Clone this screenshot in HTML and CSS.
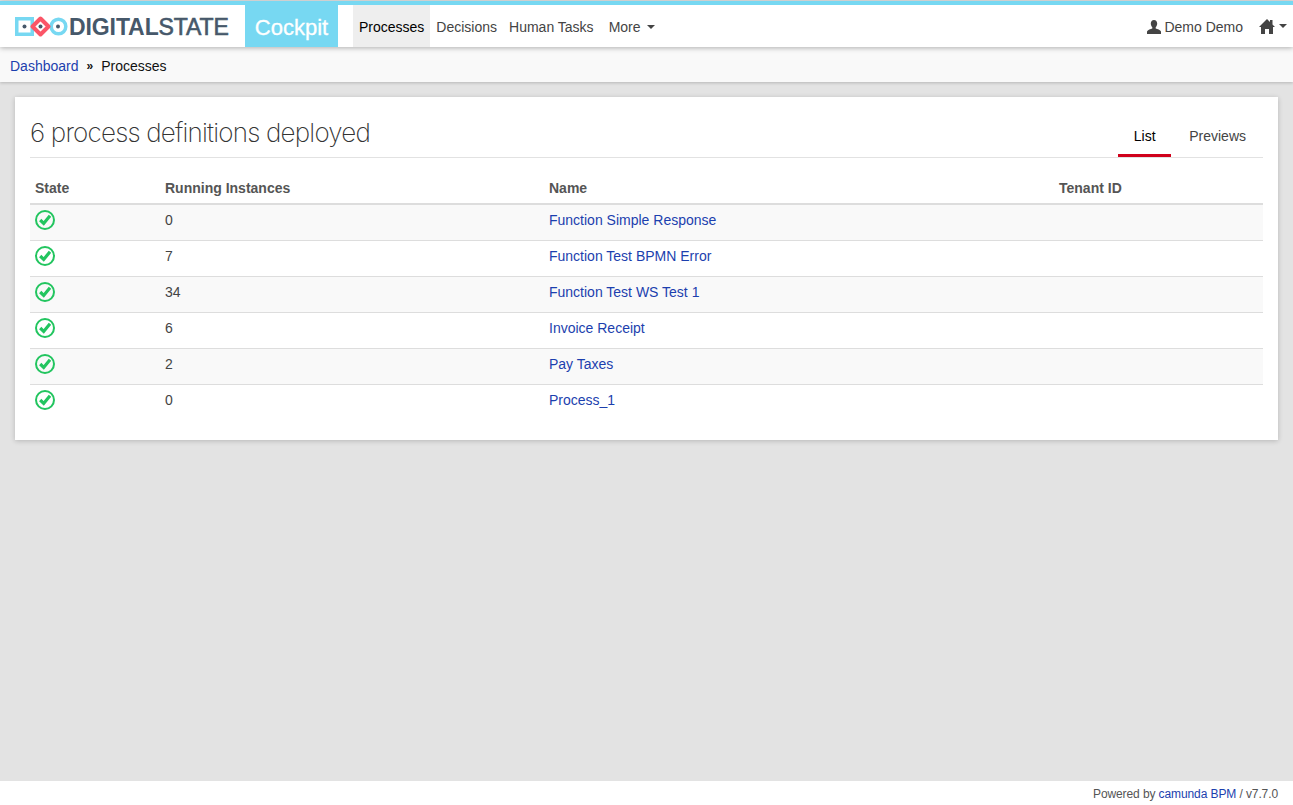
FILE: index.html
```html
<!DOCTYPE html>
<html lang="en">
<head>
    <meta charset="UTF-8">
    <title>Cockpit</title>
    <link rel="stylesheet" href="styles.css">
</head>
<body>
    <header class="navbar">
        <a class="logo" href="#">
            <svg class="logo-mark" width="54" height="22" viewBox="0 0 54 22">
                <rect x="1.750" y="2.750" width="15.500" height="15.500" fill="none" stroke="#77d8f2" stroke-width="3.500"/>
                <circle cx="9.500" cy="10.500" r="2" fill="#46586a"/>
                <circle cx="43.500" cy="10.500" r="7.300" fill="none" stroke="#77d8f2" stroke-width="3.500"/>
                <circle cx="43" cy="10.500" r="2" fill="#46586a"/>
                <polygon points="25.500,2.500 33.500,10.500 25.500,18.500 17.500,10.500" fill="#fff" stroke="#fb5567" stroke-width="4" stroke-linejoin="round"/>
                <circle cx="25.500" cy="10.500" r="2" fill="#46586a"/>
            </svg>
            <span class="logo-text">DIGITAL<span class="logo-thin">STATE</span></span>
        </a>
        <a class="brand" href="#">Cockpit</a>
        <nav class="nav-main">
            <a class="active" href="#">Processes</a>
            <a href="#">Decisions</a>
            <a href="#">Human Tasks</a>
            <a class="more" href="#">More <i class="caret"></i></a>
        </nav>
        <div class="nav-right">
            <a class="user" href="#">
                <svg width="14" height="14" viewBox="0 0 14 14"><path d="M7 0c2 0 3.200 1.500 3.200 3.600 0 1.500-.6 2.900-1.500 3.700v1.200c1.500.6 4.800 1.300 5.300 3V14H0v-2.500c.5-1.700 3.800-2.400 5.300-3V7.300C4.400 6.500 3.800 5.100 3.800 3.600 3.800 1.500 5 0 7 0z" fill="#444"/></svg>
                Demo Demo
            </a>
            <a class="home" href="#">
                <svg width="16" height="15" viewBox="0 0 16 15"><path d="M8 0l3 3V1h2.500v4.500L16 8h-2v7h-4v-5H6v5H2V8H0z" fill="#444"/></svg>
                <i class="caret"></i>
            </a>
        </div>
    </header>

    <div class="breadcrumbs">
        <a href="#">Dashboard</a>
        <span class="sep">»</span>
        <span class="current">Processes</span>
    </div>

    <main class="content">
        <section class="card">
            <div class="card-head">
                <h1>6 process definitions deployed</h1>
                <ul class="tabs">
                    <li class="active">List</li>
                    <li>Previews</li>
                </ul>
            </div>

            <table>
                <thead>
                    <tr>
                        <th class="col-state">State</th>
                        <th class="col-running">Running Instances</th>
                        <th class="col-name">Name</th>
                        <th>Tenant ID</th>
                    </tr>
                </thead>
                <tbody>
                    <tr>
                        <td><svg class="ok" viewBox="0 0 20 20"><circle cx="10" cy="10" r="9" fill="none" stroke="#22c55f" stroke-width="2"/><path d="M5.200 10l3.500 3.400 6.300-7.600" fill="none" stroke="#22c55f" stroke-width="3.200"/></svg></td>
                        <td>0</td>
                        <td><a href="#">Function Simple Response</a></td>
                        <td></td>
                    </tr>
                    <tr>
                        <td><svg class="ok" viewBox="0 0 20 20"><circle cx="10" cy="10" r="9" fill="none" stroke="#22c55f" stroke-width="2"/><path d="M5.200 10l3.500 3.400 6.300-7.600" fill="none" stroke="#22c55f" stroke-width="3.200"/></svg></td>
                        <td>7</td>
                        <td><a href="#">Function Test BPMN Error</a></td>
                        <td></td>
                    </tr>
                    <tr>
                        <td><svg class="ok" viewBox="0 0 20 20"><circle cx="10" cy="10" r="9" fill="none" stroke="#22c55f" stroke-width="2"/><path d="M5.200 10l3.500 3.400 6.300-7.600" fill="none" stroke="#22c55f" stroke-width="3.200"/></svg></td>
                        <td>34</td>
                        <td><a href="#">Function Test WS Test 1</a></td>
                        <td></td>
                    </tr>
                    <tr>
                        <td><svg class="ok" viewBox="0 0 20 20"><circle cx="10" cy="10" r="9" fill="none" stroke="#22c55f" stroke-width="2"/><path d="M5.200 10l3.500 3.400 6.300-7.600" fill="none" stroke="#22c55f" stroke-width="3.200"/></svg></td>
                        <td>6</td>
                        <td><a href="#">Invoice Receipt</a></td>
                        <td></td>
                    </tr>
                    <tr>
                        <td><svg class="ok" viewBox="0 0 20 20"><circle cx="10" cy="10" r="9" fill="none" stroke="#22c55f" stroke-width="2"/><path d="M5.200 10l3.500 3.400 6.300-7.600" fill="none" stroke="#22c55f" stroke-width="3.200"/></svg></td>
                        <td>2</td>
                        <td><a href="#">Pay Taxes</a></td>
                        <td></td>
                    </tr>
                    <tr>
                        <td><svg class="ok" viewBox="0 0 20 20"><circle cx="10" cy="10" r="9" fill="none" stroke="#22c55f" stroke-width="2"/><path d="M5.200 10l3.500 3.400 6.300-7.600" fill="none" stroke="#22c55f" stroke-width="3.200"/></svg></td>
                        <td>0</td>
                        <td><a href="#">Process_1</a></td>
                        <td></td>
                    </tr>
                </tbody>
            </table>
        </section>
    </main>

    <footer class="footer">
        Powered by <a href="#">camunda BPM</a> / v7.7.0
    </footer>
</body>
</html>
```

FILE: styles.css
```css
html, body {
    height: 100%;
}
body {
    margin: 0;
    display: flex;
    flex-direction: column;
    min-height: 805px;
    box-sizing: border-box;
    font-family: "Liberation Sans", Arial, sans-serif;
    font-size: 14px;
    color: #444;
    background-color: #e3e3e3;
    overflow: hidden;
}
a {
    color: #1c3fae;
    text-decoration: none;
}

/* top bar */
.navbar {
    display: flex;
    align-items: stretch;
    height: 42px;
    background-color: #fff;
    border-top: 4px solid #77d8f2;
    margin-top: 1px;
    box-shadow: 0 1px 5px rgba(0,0,0,0.3);
    position: relative;
    z-index: 2;
}
.logo {
    display: flex;
    align-items: center;
    width: 245px;
    padding: 2px 0 0 15px;
    box-sizing: border-box;
}
.logo-mark {
    flex: none;
}
.logo-text {
    font-size: 23px;
    line-height: 24px;
    color: #46586a;
    font-weight: bold;
    letter-spacing: -0.1px;
}
.logo-thin {
    font-weight: normal;
    -webkit-text-stroke: 0.6px #46586a;
}
.brand {
    display: flex;
    align-items: center;
    justify-content: center;
    width: 93px;
    padding-top: 3px;
    box-sizing: border-box;
    background-color: #77d8f2;
    color: #fff;
    font-size: 22px;
    -webkit-text-stroke: 0.3px #fff;
}
.nav-main {
    display: flex;
    margin-left: 15px;
}
.nav-main a,
.nav-right a {
    display: flex;
    align-items: center;
    color: #444;
    padding: 2px 6px 0;
}
.nav-main a.active {
    background-color: #eee;
    color: #000;
}
.nav-main a.more {
    margin-left: 3px;
    gap: 6px;
}
.caret {
    display: inline-block;
    width: 0;
    height: 0;
    border-top: 4px solid #444;
    border-left: 4px solid transparent;
    border-right: 4px solid transparent;
}
.nav-right {
    display: flex;
    margin-left: auto;
    padding-right: 6px;
}
.nav-right .user {
    gap: 3px;
    padding: 2px 15px 0 0;
    margin-right: 1px;
}
.nav-right .home {
    gap: 4px;
    padding: 0;
}

/* breadcrumb strip */
.breadcrumbs {
    display: flex;
    align-items: center;
    height: 35px;
    padding: 2px 0 0 10px;
    box-sizing: border-box;
    background-color: #f9f9f9;
    box-shadow: 0 1px 3px rgba(0,0,0,0.2);
    position: relative;
    z-index: 1;
    color: #111;
}
.breadcrumbs .sep {
    margin: 0 8px;
    font-size: 12px;
    font-weight: bold;
}

.content {
    flex: 1;
    padding: 15px 15px 0;
}
.card {
    background-color: #fff;
    height: 343px;
    box-sizing: border-box;
    padding: 0 15px;
    box-shadow: 0 1px 5px rgba(0,0,0,0.2);
}
.card-head {
    display: flex;
    justify-content: space-between;
    align-items: flex-end;
    height: 61px;
    box-sizing: border-box;
    border-bottom: 1px solid #e2e2e2;
}
h1 {
    margin: 0 0 6px;
    font-family: Inter, Roboto, "Liberation Sans", sans-serif;
    font-size: 26px;
    line-height: 36px;
    font-weight: 200;
    letter-spacing: -0.8px;
    color: #333;
}
.tabs {
    display: flex;
    list-style: none;
    margin: 0 2px 0 0;
    padding: 0;
}
.tabs li {
    padding: 0 15px;
    height: 39px;
    line-height: 36px;
    box-sizing: border-box;
    margin-left: 3px;
}
.tabs li.active {
    color: #000;
    min-width: 53px;
    text-align: center;
    border-bottom: 3px solid #d0011b;
}

/* process table */
table {
    width: 100%;
    border-collapse: collapse;
    table-layout: fixed;
    margin-top: 13px;
}
th {
    text-align: left;
    font-weight: bold;
    height: 33px;
    padding: 2px 5px 0;
    box-sizing: border-box;
    border-bottom: 2px solid #ddd;
    color: #555;
}
td {
    height: 36px;
    padding: 5px;
    line-height: 20px;
    vertical-align: top;
    box-sizing: border-box;
    border-bottom: 1px solid #ddd;
}
tbody tr:nth-child(odd) {
    background-color: #f9f9f9;
}
tbody tr:last-child {
    background-color: #fff;
}
tbody tr:last-child td {
    border-bottom: none;
}
.col-state {
    width: 130px;
}
.col-running {
    width: 384px;
}
.col-name {
    width: 510px;
}
.ok {
    display: block;
    width: 20px;
    height: 20px;
}

.footer {
    height: 24px;
    line-height: 26px;
    background-color: #fff;
    text-align: right;
    padding-right: 15px;
    font-size: 12px;
    letter-spacing: -0.1px;
    color: #555;
}
```
